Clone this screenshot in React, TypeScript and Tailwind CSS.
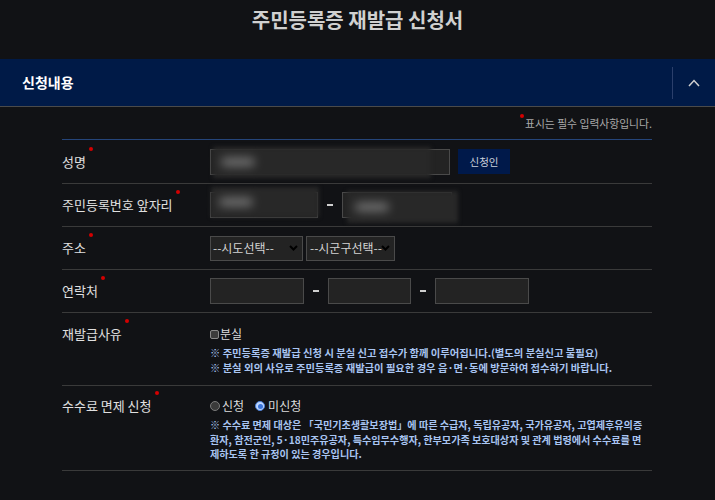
import type { ReactNode } from 'react'

const font = { fontFamily: '"Noto Sans CJK KR", "Noto Sans", sans-serif' }

function Dot() {
  return <span className="absolute right-[-7px] top-[-5px] h-[4px] w-[4px] rounded-full bg-[#d40000]" />
}

function Label({ children }: { children: ReactNode }) {
  return (
    <div className="w-[148px] shrink-0 text-[13px] leading-[16px] text-[#e0e0e0]">
      <span className="relative">
        {children}
        <Dot />
      </span>
    </div>
  )
}

function Blur({ className }: { className: string }) {
  return (
    <div className={`pointer-events-none absolute bg-[#282828] blur-[2px] ${className}`}>
      <div className="absolute left-[8px] top-1/2 h-[9px] w-[34px] -translate-y-1/2 rounded-full bg-[#707070] blur-[4px]" />
    </div>
  )
}

function Dash() {
  return <div className="mx-[9px] h-[2px] w-[6px] bg-[#cfcfcf]" />
}

function Caret() {
  return (
    <svg width="9" height="6" viewBox="0 0 9 6" className="absolute right-[4px] top-1/2 -translate-y-1/2">
      <polyline points="1,1 4.5,4.5 8,1" fill="none" stroke="#000" strokeWidth="2" />
    </svg>
  )
}

export default function App() {
  return (
    <div className="min-h-[500px] w-full bg-[#111215]" style={font}>
      <div className="flex h-[59px] justify-center pt-[7px]">
        <h1 className="text-[20px] font-bold leading-[26px] text-[#d0d0d0]">주민등록증 재발급 신청서</h1>
      </div>

      <div className="flex h-[48px] items-center border-b border-[#4a4a4a] bg-[#001a47]">
        <h2 className="flex-1 pl-[22px] text-[14px] font-bold text-white">신청내용</h2>
        <div className="h-[32px] w-px bg-[#2b3f6b]" />
        <div className="flex w-[42px] justify-center">
          <svg width="12" height="8" viewBox="0 0 12 8">
            <polyline points="1,7 6,1.5 11,7" fill="none" stroke="#d0d0d0" strokeWidth="1.5" />
          </svg>
        </div>
      </div>

      <div className="flex justify-end pr-[63px] pt-[9px]">
        <p className="relative text-[10.8px] leading-[14px] text-[#a8a8a8]">
          <span className="absolute left-[-5px] top-[-2px] h-[4px] w-[4px] rounded-full bg-[#d40000]" />
          표시는 필수 입력사항입니다.
        </p>
      </div>

      <div className="ml-[62px] mt-[9px] w-[590px] border-t border-[#25457a]">
        <div className="flex h-[44px] items-center border-b border-[#3a3a3a]">
          <Label>성명</Label>
          <div className="relative h-[26px] w-[240px] border border-[#4a4a4a] bg-[#232323]">
            <Blur className="left-[2px] top-[-3px] h-[31px] w-[218px]" />
          </div>
          <button className="ml-[8px] h-[25px] w-[52px] bg-[#00194a] text-[10.5px] text-[#cdd3dd]">신청인</button>
        </div>

        <div className="flex h-[43px] items-center border-b border-[#3a3a3a]">
          <Label>주민등록번호 앞자리</Label>
          <div className="relative h-[26px] w-[108px] border border-[#4a4a4a] bg-[#232323]">
            <Blur className="left-0 top-[-6px] h-[30px] w-[108px]" />
          </div>
          <Dash />
          <div className="relative h-[26px] w-[110px] border border-[#4a4a4a] bg-[#232323]">
            <Blur className="left-[4px] top-[-2px] h-[32px] w-[111px]" />
          </div>
        </div>

        <div className="flex h-[43px] items-center border-b border-[#3a3a3a]">
          <Label>주소</Label>
          <div className="relative flex h-[25px] w-[93px] items-center border border-[#4a4a4a] bg-[#232323] pl-[2px] text-[12px] text-[#d4d4d4]">
            --시도선택--
            <Caret />
          </div>
          <div className="relative ml-[3px] flex h-[25px] w-[89px] items-center border border-[#4a4a4a] bg-[#232323] pl-[3px] text-[12px] text-[#d4d4d4]">
            --시군구선택--
            <Caret />
          </div>
        </div>

        <div className="flex h-[43px] items-center border-b border-[#3a3a3a]">
          <Label>연락처</Label>
          <div className="h-[26px] w-[94px] border border-[#4a4a4a] bg-[#232323]" />
          <Dash />
          <div className="h-[26px] w-[83px] border border-[#4a4a4a] bg-[#232323]" />
          <Dash />
          <div className="h-[26px] w-[94px] border border-[#4a4a4a] bg-[#232323]" />
        </div>

        <div className="flex items-start border-b border-[#3a3a3a] pb-[10px] pt-[13px]">
          <Label>재발급사유</Label>
          <div>
            <div className="flex h-[16px] items-center text-[12px] text-[#dcdcdc]">
              <span className="mr-[1px] h-[9px] w-[9px] rounded-[2px] border border-[#8a8a8a] bg-[#3c3c3c]" />
              분실
            </div>
            <div className="mt-[3px] text-[10.3px] font-bold leading-[15px] text-[#a9c5f2]">
              <p>※ 주민등록증 재발급 신청 시 분실 신고 접수가 함께 이루어집니다.(별도의 분실신고 불필요)</p>
              <p>※ 분실 외의 사유로 주민등록증 재발급이 필요한 경우 읍·면·동에 방문하여 접수하기 바랍니다.</p>
            </div>
          </div>
        </div>

        <div className="flex items-start border-b border-[#3a3a3a] pb-[8px] pt-[12px]">
          <Label>수수료 면제 신청</Label>
          <div>
            <div className="flex h-[16px] items-center text-[12px] text-[#dcdcdc]">
              <span className="mr-[2px] h-[10px] w-[10px] rounded-full border border-[#7a7a7a] bg-[#3a3a3a]" />
              신청
              <span className="ml-[11px] mr-[3px] flex h-[10px] w-[10px] items-center justify-center rounded-full border border-[#4a7fd6] bg-[#bcd6ff]">
                <span className="h-[5px] w-[5px] rounded-full bg-[#3a74d8]" />
              </span>
              미신청
            </div>
            <div className="mt-[4px] whitespace-nowrap text-[10.1px] font-bold leading-[14.5px] text-[#a9c5f2]">
              <p>※ 수수료 면제 대상은 「국민기초생활보장법」에 따른 수급자, 독립유공자, 국가유공자, 고엽제후유의증</p>
              <p>환자, 참전군인, 5·18민주유공자, 특수임무수행자, 한부모가족 보호대상자 및 관계 법령에서 수수료를 면</p>
              <p>제하도록 한 규정이 있는 경우입니다.</p>
            </div>
          </div>
        </div>
      </div>
    </div>
  )
}
